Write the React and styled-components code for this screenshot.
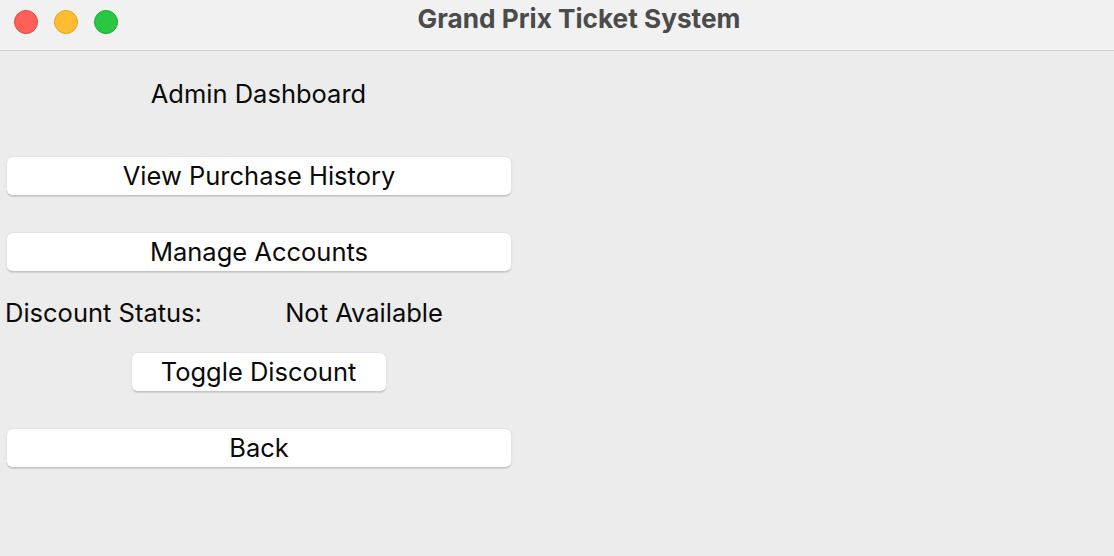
import React from "react";
import styled, { createGlobalStyle } from "styled-components";

const GlobalStyle = createGlobalStyle`
  html, body {
    margin: 0;
    padding: 0;
    background: #ececec;
  }
  body {
    font-family: Inter, "Liberation Sans", sans-serif;
  }
`;

const Window = styled.div`
  width: 1114px;
  height: 556px;
  background: #ececec;
  display: flex;
  flex-direction: column;
  overflow: hidden;
`;

const TitleBar = styled.div`
  height: 50px;
  flex: none;
  background: #f1f1f1;
  border-bottom: 1px solid #d2d2d2;
  display: grid;
  grid-template-columns: 1fr auto 1fr;
  align-items: center;
`;

const Lights = styled.div`
  display: flex;
  gap: 16px;
  padding-left: 14px;
  margin-top: -7px;
`;

const Light = styled.span`
  width: 24px;
  height: 24px;
  border-radius: 50%;
  box-sizing: border-box;
  background: ${(p) => p.$fill};
  border: 1px solid ${(p) => p.$edge};
`;

const Title = styled.div`
  font-family: Inter, "Liberation Sans", sans-serif;
  font-weight: 700;
  font-size: 26.2px;
  color: #4b4b4b;
  margin-top: -14px;
  padding-left: 44px;
`;

const Panel = styled.div`
  display: grid;
  grid-template-columns: 211px 306px;
  grid-template-rows: 87px 76px 76px 44px 76px 76px;
  align-items: center;
`;

const Heading = styled.div`
  grid-column: 1 / span 2;
  justify-self: center;
  padding-bottom: 2px;
  font-size: 25.5px;
  color: #0a0a0a;
`;

const Label = styled.div`
  justify-self: ${(p) => (p.$center ? "center" : "start")};
  padding-left: ${(p) => (p.$center ? "0" : "5px")};
  font-size: 25.5px;
  color: #0a0a0a;
`;

const Button = styled.button`
  grid-column: 1 / span 2;
  justify-self: ${(p) => (p.$width ? "center" : "stretch")};
  width: ${(p) => (p.$width ? `${p.$width}px` : "auto")};
  margin: ${(p) => (p.$width ? "0" : "0 5px 0 6px")};
  height: 40px;
  box-sizing: border-box;
  background: #ffffff;
  border: 1px solid #e4e4e4;
  border-bottom-color: #c4c4c4;
  border-radius: 7px;
  box-shadow: 0 1px 1px rgba(0, 0, 0, 0.12);
  font-family: Inter, "Liberation Sans", sans-serif;
  font-size: 25.5px;
  color: #0a0a0a;
  padding: 0 0 2px;
  cursor: pointer;
`;

export default function App() {
  return (
    <Window>
      <GlobalStyle />
      <TitleBar>
        <Lights>
          <Light $fill="#fe5f57" $edge="#e2463f" />
          <Light $fill="#febc2e" $edge="#e0a323" />
          <Light $fill="#28c840" $edge="#1eaa30" />
        </Lights>
        <Title>Grand Prix Ticket System</Title>
        <div />
      </TitleBar>
      <Panel>
        <Heading>Admin Dashboard</Heading>
        <Button>View Purchase History</Button>
        <Button>Manage Accounts</Button>
        <Label>Discount Status:</Label>
        <Label $center>Not Available</Label>
        <Button $width={256}>Toggle Discount</Button>
        <Button>Back</Button>
      </Panel>
    </Window>
  );
}
